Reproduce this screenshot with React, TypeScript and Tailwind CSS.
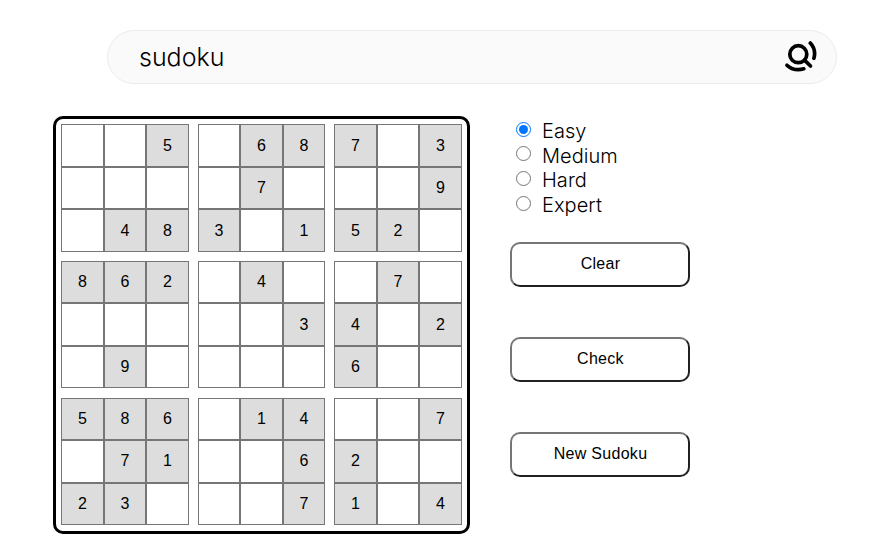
import { useState } from "react";

const puzzle = [
  "  5 687 3",
  "    7   9",
  " 483 152 ",
  "862 4  7 ",
  "     34 2",
  " 9    6  ",
  "586 14  7",
  " 71  62  ",
  "23   71 4",
];

const levels = ["Easy", "Medium", "Hard", "Expert"];
const actions = ["Clear", "Check", "New Sudoku"];
const bands = [0, 1, 2];

const boxColumns = [
  "grid-cols-[43px_42px_43px]",
  "grid-cols-[42px_43px_42px]",
  "grid-cols-[43px_42px_43px]",
];
const boxRows = [
  "grid-rows-[43px_42px_43px]",
  "grid-rows-[42px_43px_42px]",
  "grid-rows-[42px_43px_42px]",
];

function Box({ band, stack }: { band: number; stack: number }) {
  return (
    <div className={`grid ${boxColumns[stack]} ${boxRows[band]}`}>
      {bands.flatMap((r) =>
        bands.map((c) => {
          const value = puzzle[band * 3 + r][stack * 3 + c].trim();
          return (
            <div
              key={`${r}${c}`}
              className={`flex items-center justify-center border border-[#767676] ${band === 2 && r === 1 ? "pb-px" : ""} ${value ? "bg-[#dddddd]" : "bg-white"}`}
            >
              {value}
            </div>
          );
        }),
      )}
    </div>
  );
}

function SearchIcon() {
  return (
    <svg width="34" height="34" viewBox="0 0 34 34" fill="none" stroke="black" strokeWidth="3.7" strokeLinecap="round">
      <circle cx="14.3" cy="14.2" r="8.5" />
      <path d="M20.5 20.2L26.5 26" />
      <path d="M26.3 3C30.5 7.5 31.4 13 29.9 18.3" />
      <path d="M3 25.3C8 29.6 14 30.6 19.8 28.8" />
    </svg>
  );
}

export default function App() {
  const [level, setLevel] = useState("Easy");

  return (
    <main className="h-[553px] w-[883px] overflow-hidden bg-white pt-[30px] text-black">
      <div className="ml-[107px] flex h-[54px] w-[730px] items-center justify-between rounded-full border border-[#ececec] bg-[#fafafa] pr-[18px] pl-[31px] font-['Inter',sans-serif] text-[25px] font-[340]">
        <span className="pt-[2px]">sudoku</span>
        <SearchIcon />
      </div>
      <div className="mt-8 ml-[53px] flex items-start gap-10">
        <div className="grid h-[418px] w-[417px] grid-cols-[128px_127px_128px] grid-rows-[128px_128px_127px] gap-[9px] rounded-[10px] border-[3px] border-black p-[5px] font-['Liberation_Sans',Arial,sans-serif] text-base">
          {bands.flatMap((band) => bands.map((stack) => <Box key={`${band}${stack}`} band={band} stack={stack} />))}
        </div>
        <div className="w-[180px] pt-[3px]">
          <div className="ml-[6px] font-['Inter',sans-serif] text-[20px] leading-[24.6px] font-[340] tracking-[0.05px]">
            {levels.map((name) => (
              <label key={name} className="flex items-start">
                <input
                  type="radio"
                  name="level"
                  checked={level === name}
                  onChange={() => setLevel(name)}
                  className="mt-[2.8px] mr-[11px] size-[15px]"
                />
                {name}
              </label>
            ))}
          </div>
          <div className="mt-[25px] flex flex-col gap-[50px]">
            {actions.map((name) => (
              <button
                key={name}
                className="h-[45px] w-[180px] rounded-[10px] border-2 border-t-[#767676] border-r-[#212121] border-b-[#212121] border-l-[#767676] bg-white pb-px pl-px font-['Liberation_Sans',Arial,sans-serif] text-base tracking-[0.3px]"
              >
                {name}
              </button>
            ))}
          </div>
        </div>
      </div>
    </main>
  );
}
